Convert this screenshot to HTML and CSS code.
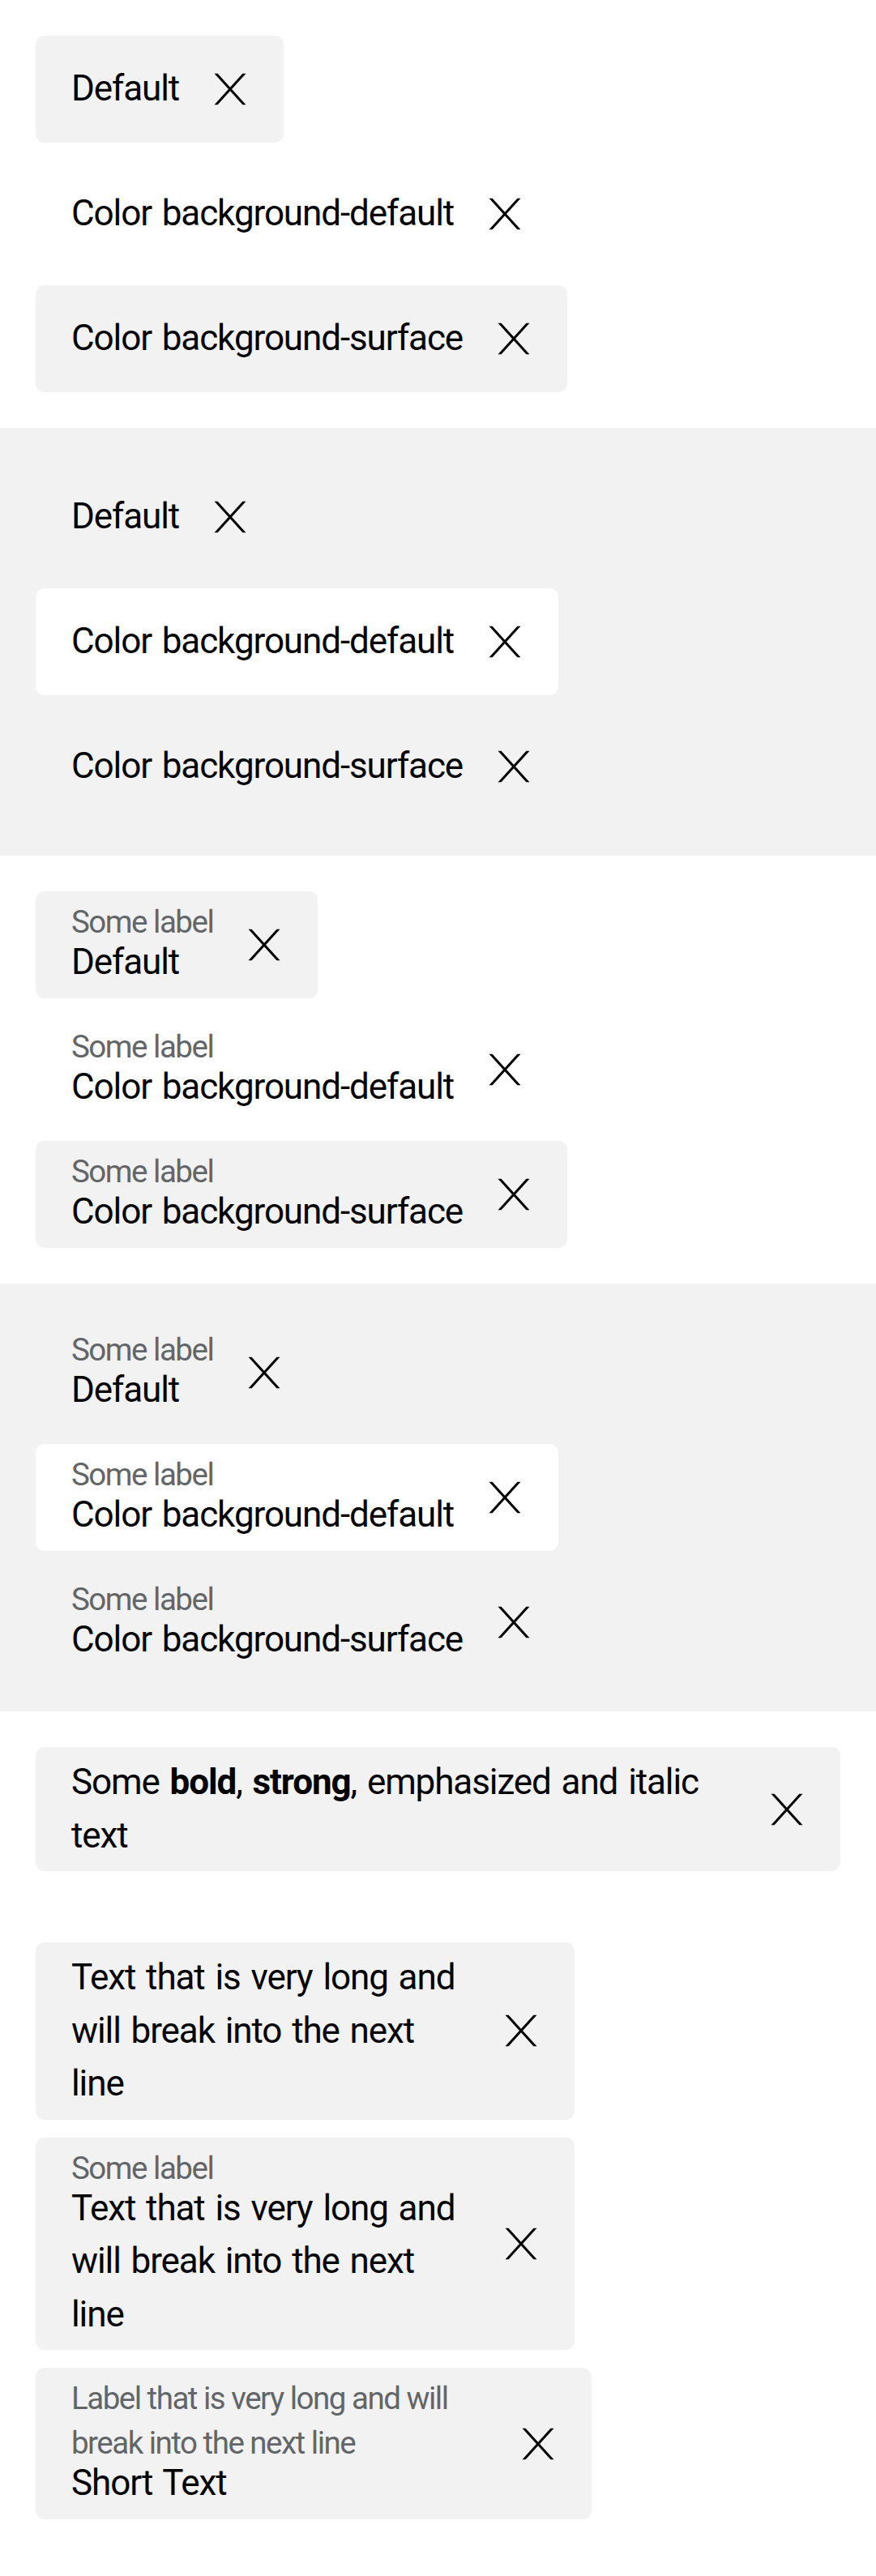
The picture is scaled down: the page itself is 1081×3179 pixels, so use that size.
FILE: index.html
```html
<!DOCTYPE html>
<html lang="en">
<head>
<meta charset="utf-8">
<title>Tag Dismissible</title>
<link rel="stylesheet" href="styles.css">
</head>
<body>
<svg class="sprite" xmlns="http://www.w3.org/2000/svg" aria-hidden="true">
  <symbol id="close" viewBox="0 0 24 24">
    <path d="M4.91 19h1.5L12 12.83 17.59 19h1.5l-6.34-7 6.34-7h-1.5L12 11.17 6.41 5h-1.5l6.34 7z"/>
  </symbol>
</svg>

<section class="section">
  <button class="tag tag--surface"><span class="tag__content"><span class="tag__text">Default</span></span><svg class="tag__icon"><use href="#close"/></svg></button>
  <button class="tag tag--default"><span class="tag__content"><span class="tag__text">Color background-default</span></span><svg class="tag__icon"><use href="#close"/></svg></button>
  <button class="tag tag--surface"><span class="tag__content"><span class="tag__text">Color background-surface</span></span><svg class="tag__icon"><use href="#close"/></svg></button>
</section>

<section class="section section--surface">
  <button class="tag tag--surface"><span class="tag__content"><span class="tag__text">Default</span></span><svg class="tag__icon"><use href="#close"/></svg></button>
  <button class="tag tag--default"><span class="tag__content"><span class="tag__text">Color background-default</span></span><svg class="tag__icon"><use href="#close"/></svg></button>
  <button class="tag tag--surface"><span class="tag__content"><span class="tag__text">Color background-surface</span></span><svg class="tag__icon"><use href="#close"/></svg></button>
</section>

<section class="section">
  <button class="tag tag--surface"><span class="tag__content"><span class="tag__label">Some label</span><span class="tag__text">Default</span></span><svg class="tag__icon"><use href="#close"/></svg></button>
  <button class="tag tag--default"><span class="tag__content"><span class="tag__label">Some label</span><span class="tag__text">Color background-default</span></span><svg class="tag__icon"><use href="#close"/></svg></button>
  <button class="tag tag--surface"><span class="tag__content"><span class="tag__label">Some label</span><span class="tag__text">Color background-surface</span></span><svg class="tag__icon"><use href="#close"/></svg></button>
</section>

<section class="section section--surface">
  <button class="tag tag--surface"><span class="tag__content"><span class="tag__label">Some label</span><span class="tag__text">Default</span></span><svg class="tag__icon"><use href="#close"/></svg></button>
  <button class="tag tag--default"><span class="tag__content"><span class="tag__label">Some label</span><span class="tag__text">Color background-default</span></span><svg class="tag__icon"><use href="#close"/></svg></button>
  <button class="tag tag--surface"><span class="tag__content"><span class="tag__label">Some label</span><span class="tag__text">Color background-surface</span></span><svg class="tag__icon"><use href="#close"/></svg></button>
</section>

<section class="section">
  <button class="tag tag--surface"><span class="tag__content"><span class="tag__text">Some <b>bold</b>, <strong>strong</strong>, <em>emphasized</em> and <i>italic</i> text</span></span><svg class="tag__icon"><use href="#close"/></svg></button>
</section>

<section class="section">
  <button class="tag tag--surface tag--narrow"><span class="tag__content"><span class="tag__text">Text that is very long and will break into the next line</span></span><svg class="tag__icon"><use href="#close"/></svg></button>
  <button class="tag tag--surface tag--narrow"><span class="tag__content"><span class="tag__label">Some label</span><span class="tag__text">Text that is very long and will break into the next line</span></span><svg class="tag__icon"><use href="#close"/></svg></button>
  <button class="tag tag--surface tag--wide"><span class="tag__content"><span class="tag__label">Label that is very long and will break into the next line</span><span class="tag__text">Short Text</span></span><svg class="tag__icon"><use href="#close"/></svg></button>
</section>
</body>
</html>
```

FILE: styles.css
```css
* {
  box-sizing: border-box;
}

html,
body {
  margin: 0;
  padding: 0;
  background: #fff;
}

body {
  width: 1081px;
  font-family: Roboto, "Liberation Sans", Arial, sans-serif;
  color: #000;
}

.sprite {
  display: none;
}

.section {
  display: flex;
  flex-direction: column;
  align-items: flex-start;
  gap: 22px;
  padding: 44px;
}

.section--surface {
  background: #f2f2f2;
}

.tag {
  display: flex;
  align-items: center;
  gap: 30px;
  max-width: 100%;
  min-height: 132px;
  margin: 0;
  padding: 11px 33px 11px 44px;
  border: 0;
  border-radius: 11px;
  font: inherit;
  color: inherit;
  text-align: left;
  cursor: pointer;
}

.tag--surface {
  background: #f2f2f2;
}

.tag--default {
  background: #fff;
}

.tag--narrow {
  width: 665px;
}

.tag--wide {
  width: 686px;
}

.tag__content {
  display: flex;
  flex-direction: column;
  min-width: 0;
}

.tag__label {
  margin-bottom: -10px;
  font-size: 38.5px;
  line-height: 54.4px;
  color: #626669;
  letter-spacing: -1.5px;
}

.tag__text {
  font-size: 44px;
  line-height: 65.5px;
  color: #000;
  letter-spacing: -1.1px;
  word-spacing: 3px;
}

.tag__text b,
.tag__text strong {
  font-weight: 700;
}

.tag__text em,
.tag__text i {
  font-style: normal;
}

.tag__icon {
  flex: none;
  width: 66px;
  height: 66px;
  fill: #000;
}
```
